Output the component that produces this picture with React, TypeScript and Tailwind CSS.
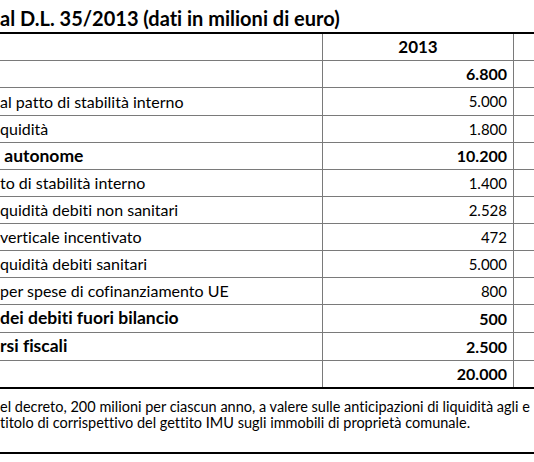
const rows = [
  { label: "", value: "6.800", bold: true, h: "h-[27px]" },
  { label: "al patto di stabilità interno", value: "5.000", bold: false, h: "h-[28px]" },
  { label: "quidità", value: "1.800", bold: false, h: "h-[27px]" },
  { label: " autonome", value: "10.200", bold: true, h: "h-[27px]" },
  { label: "to di stabilità interno", value: "1.400", bold: false, h: "h-[27px]" },
  { label: "quidità debiti non sanitari", value: "2.528", bold: false, h: "h-[27px]" },
  { label: "verticale incentivato", value: "472", bold: false, h: "h-[27px]" },
  { label: "quidità debiti sanitari", value: "5.000", bold: false, h: "h-[27px]" },
  { label: "per spese di cofinanziamento UE", value: "800", bold: false, h: "h-[27px]" },
  { label: "dei debiti fuori bilancio", value: "500", bold: true, h: "h-[28px]" },
  { label: "rsi fiscali", value: "2.500", bold: true, h: "h-[28px]" },
  { label: "", value: "20.000", bold: true, h: "h-[28px]" },
];

export default function App() {
  return (
    <div className="w-[534px] h-[462px] overflow-hidden bg-white text-black font-['Lato',_sans-serif] [font-variant-ligatures:none]">
      {/* titolo */}
      <div className="h-[34px] flex items-end pb-[4px] border-b-2 border-black">
        <h1 className="text-[20px] font-bold whitespace-nowrap leading-none">
          al D.L. 35/2013 (dati in milioni di euro)
        </h1>
      </div>

      {/* intestazione */}
      <div className="flex h-[27px] border-b border-[#7a7a7a]">
        <div className="w-[323px] shrink-0 border-r border-[#7a7a7a]" />
        <div className="w-[191px] shrink-0 border-r border-[#7a7a7a] flex items-center justify-center font-bold text-[17px]">
          2013
        </div>
        <div className="flex-1" />
      </div>

      {/* righe */}
      {rows.map((r, i) => (
        <div
          key={i}
          className={`flex ${r.h} ${i === rows.length - 1 ? "border-b-2 border-black" : "border-b border-[#7a7a7a]"}`}
        >
          <div
            className={`w-[323px] shrink-0 border-r border-[#7a7a7a] flex items-center whitespace-pre ${
              r.bold ? "font-bold text-[17.5px]" : "text-[16px]"
            }`}
          >
            {r.label}
          </div>
          <div
            className={`w-[191px] shrink-0 border-r border-[#7a7a7a] flex items-center justify-end pr-[6px] ${
              r.bold ? "font-bold text-[16px]" : "text-[15px]"
            }`}
          >
            {r.value}
          </div>
          <div className="flex-1" />
        </div>
      ))}

      {/* note */}
      <div className="h-[65px] border-b-2 border-black pt-[10px] text-[14.5px] leading-[16px] whitespace-nowrap">
        <p>el decreto, 200 milioni per ciascun anno, a valere sulle anticipazioni di liquidità agli e</p>
        <p>titolo di corrispettivo del gettito IMU sugli immobili di proprietà comunale.</p>
      </div>
    </div>
  );
}
